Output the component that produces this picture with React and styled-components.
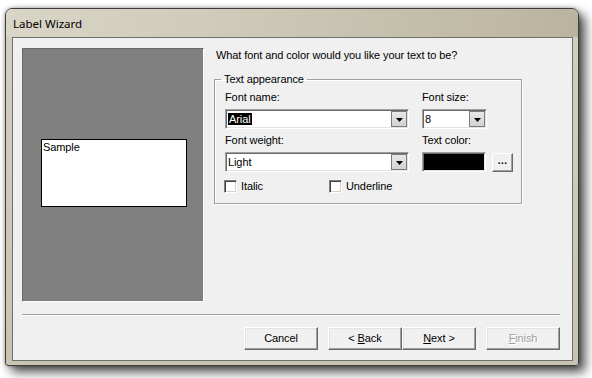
import React from "react";
import styled, { createGlobalStyle } from "styled-components";

const GlobalStyle = createGlobalStyle`
  html, body {
    margin: 0;
    background: #ffffff;
  }
  body {
    font-family: "Liberation Sans", Arial, sans-serif;
    font-size: 11px;
    letter-spacing: -0.1px;
    color: #000;
  }
`;

const Screen = styled.div`
  width: 592px;
  height: 378px;
  box-sizing: border-box;
  padding: 8px 0 0 5px;
  overflow: hidden;
`;

const Window = styled.div`
  width: 574px;
  height: 358px;
  box-sizing: border-box;
  border: 1px solid #3c3c3c;
  border-radius: 7px 7px 3px 3px;
  background: linear-gradient(to bottom, #d3cfbf, #c9c4b1);
  box-shadow: 0 0 4px rgba(0, 0, 0, 0.35), 6px 6px 11px rgba(0, 0, 0, 0.7);
  display: flex;
  flex-direction: column;
`;

const TitleBar = styled.div`
  height: 28px;
  flex-shrink: 0;
  display: flex;
  align-items: center;
  padding-left: 7px;
  border-radius: 6px 6px 0 0;
  background: linear-gradient(to right, #d9d5c7 0%, #cdc8b6 45%, #bab49f 100%);
  font-family: "Noto Sans", "Open Sans", sans-serif;
  font-size: 11.5px;
  letter-spacing: 0;
  color: #000;
`;

const Frame = styled.div`
  flex: 1;
  display: flex;
  padding: 0 5px 4px 6px;
`;

const Client = styled.div`
  flex: 1;
  box-sizing: border-box;
  border: 1px solid #6f6f6f;
  background: #f0f0f0;
  padding: 10px 12px 0 9px;
  display: flex;
  flex-direction: column;
`;

const TopRow = styled.div`
  display: flex;
  align-items: flex-start;
`;

const PreviewPanel = styled.div`
  width: 182px;
  height: 254px;
  box-sizing: border-box;
  border: 1px solid;
  border-color: #696969 #ffffff #ffffff #696969;
  background: #808080;
  display: flex;
  align-items: center;
  justify-content: center;
  padding-bottom: 4px;
`;

const SampleBox = styled.div`
  width: 146px;
  height: 68px;
  box-sizing: border-box;
  border: 1px solid #000;
  background: #fff;
  padding: 1px 0 0 1px;
  font-size: 11px;
  line-height: 13px;
  margin-left: 2px;
`;

const RightColumn = styled.div`
  margin-left: 10px;
  width: 308px;
  display: flex;
  flex-direction: column;
`;

const Prompt = styled.div`
  padding: 1px 0 0 2px;
  line-height: 13px;
  white-space: nowrap;
`;

const GroupBox = styled.fieldset`
  margin: 11px 0 0;
  min-width: 0;
  padding: 5px 10px 10px;
  border: 1px solid #a0a0a0;
  box-shadow: 1px 1px 0 #fff, inset 1px 1px 0 #fff;
`;

const Legend = styled.legend`
  padding: 0 3px;
  margin-left: -4px;
  line-height: 13px;
`;

const FieldGrid = styled.div`
  display: grid;
  grid-template-columns: 184px 91px;
  column-gap: 13px;
`;

const Label = styled.div`
  line-height: 13px;
  margin-top: ${(p) => (p.$first ? 0 : 5)}px;
  white-space: nowrap;
`;

const Sunken = styled.div`
  height: 20px;
  box-sizing: border-box;
  margin-top: 5px;
  border: 1px solid;
  border-color: #a0a0a0 #ffffff #ffffff #a0a0a0;
  box-shadow: inset 1px 1px 0 #696969, inset -1px -1px 0 #e3e3e3;
  padding: 1px;
  display: flex;
  background: ${(p) => p.$fill || "#fff"};
  width: ${(p) => (p.$width ? `${p.$width}px` : "auto")};
`;

const ComboValue = styled.div`
  flex: 1;
  display: flex;
  align-items: center;
  padding-left: 1px;
  line-height: 12px;
`;

const Selected = styled.span`
  background: #000;
  color: #fff;
  padding: 0 1px;
`;

const DropButton = styled.div`
  width: 16px;
  box-sizing: border-box;
  border: 1px solid #7c7c7c;
  background: linear-gradient(to bottom, #e8e8e8, #d2d2d2);
  display: flex;
  align-items: center;
  justify-content: center;
  padding-top: 2px;
`;

const ColorRow = styled.div`
  display: flex;
  align-items: flex-start;
  gap: 6px;
`;

const SmallButton = styled.div`
  width: 21px;
  height: 19px;
  margin-top: 6px;
  box-sizing: border-box;
  border: 1px solid;
  border-color: #ffffff #696969 #696969 #ffffff;
  box-shadow: inset -1px -1px 0 #a0a0a0;
  background: #f0f0f0;
  display: flex;
  align-items: center;
  justify-content: center;
  font-weight: bold;
  font-size: 10px;
  line-height: 10px;
  padding-bottom: 3px;
  letter-spacing: 0.5px;
`;

const CheckRow = styled.div`
  grid-column: 1 / -1;
  display: flex;
  margin: 8px 0 0 -1px;
`;

const CheckItem = styled.label`
  display: flex;
  align-items: center;
  gap: 4px;
  height: 13px;
  line-height: 13px;
  width: ${(p) => (p.$width ? `${p.$width}px` : "auto")};
`;

const CheckBox = styled.span`
  width: 13px;
  height: 13px;
  box-sizing: border-box;
  border: 1px solid;
  border-color: #808080 #ffffff #ffffff #808080;
  box-shadow: inset 1px 1px 0 #404040, inset -1px -1px 0 #d4d0c8;
  background: #fff;
`;

const Separator = styled.div`
  margin-top: 12px;
  height: 2px;
  box-sizing: border-box;
  border-top: 1px solid #a0a0a0;
  border-bottom: 1px solid #ffffff;
`;

const ButtonRow = styled.div`
  display: flex;
  justify-content: flex-end;
  margin-top: 11px;
`;

const PushButton = styled.div`
  width: 74px;
  height: 23px;
  box-sizing: border-box;
  border: 1px solid;
  border-color: #ffffff #696969 #696969 #ffffff;
  box-shadow: inset -1px -1px 0 #a0a0a0, inset 1px 1px 0 #e3e3e3;
  background: #f0f0f0;
  display: flex;
  align-items: center;
  justify-content: center;
  line-height: 13px;
  margin-right: ${(p) => p.$gap || 0}px;
  color: ${(p) => (p.$disabled ? "#a0a0a0" : "#000")};
  text-shadow: ${(p) => (p.$disabled ? "1px 1px 0 #fff" : "none")};
`;

function Arrow() {
  return (
    <svg width="7" height="4" viewBox="0 0 7 4">
      <polygon points="0,0 7,0 3.5,4" fill="#000" />
    </svg>
  );
}

function Combo({ value, width, selected }) {
  return (
    <Sunken $width={width}>
      <ComboValue>{selected ? <Selected>{value}</Selected> : value}</ComboValue>
      <DropButton>
        <Arrow />
      </DropButton>
    </Sunken>
  );
}

export default function App() {
  return (
    <>
      <GlobalStyle />
      <Screen>
        <Window>
          <TitleBar>Label Wizard</TitleBar>
          <Frame>
            <Client>
              <TopRow>
                <PreviewPanel>
                  <SampleBox>Sample</SampleBox>
                </PreviewPanel>
                <RightColumn>
                  <Prompt>What font and color would you like your text to be?</Prompt>
                  <GroupBox>
                    <Legend>Text appearance</Legend>
                    <FieldGrid>
                      <Label $first>Font name:</Label>
                      <Label $first>Font size:</Label>
                      <Combo value="Arial" selected />
                      <Combo value="8" width={65} />
                      <Label>Font weight:</Label>
                      <Label>Text color:</Label>
                      <Combo value="Light" />
                      <ColorRow>
                        <Sunken $width={65} $fill="#000" />
                        <SmallButton>...</SmallButton>
                      </ColorRow>
                      <CheckRow>
                        <CheckItem $width={105}>
                          <CheckBox />
                          Italic
                        </CheckItem>
                        <CheckItem>
                          <CheckBox />
                          Underline
                        </CheckItem>
                      </CheckRow>
                    </FieldGrid>
                  </GroupBox>
                </RightColumn>
              </TopRow>
              <Separator />
              <ButtonRow>
                <PushButton $gap={10}>Cancel</PushButton>
                <PushButton>
                  &lt;&nbsp;<u>B</u>ack
                </PushButton>
                <PushButton $gap={10}>
                  <u>N</u>ext&nbsp;&gt;
                </PushButton>
                <PushButton $disabled>
                  <u>F</u>inish
                </PushButton>
              </ButtonRow>
            </Client>
          </Frame>
        </Window>
      </Screen>
    </>
  );
}
